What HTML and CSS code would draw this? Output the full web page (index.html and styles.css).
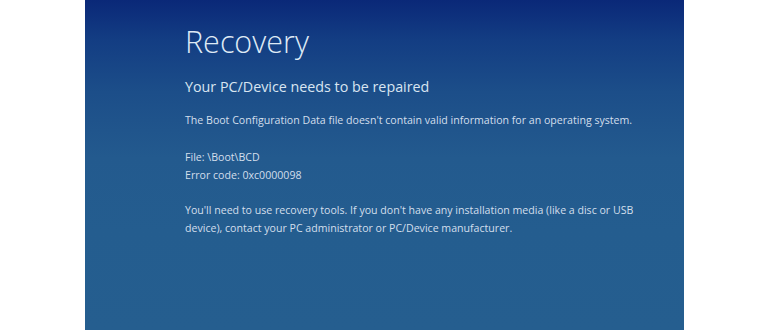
FILE: index.html
```html
<!DOCTYPE html>
<html lang="en">
<head>
<meta charset="utf-8">
<title>Recovery</title>
<link rel="stylesheet" href="styles.css">
</head>
<body>
<main class="screen">
  <h1 class="title">Recovery</h1>
  <h2 class="subtitle">Your PC/Device needs to be repaired</h2>
  <p class="text">The Boot Configuration Data file doesn't contain valid information for an operating system.</p>
  <p class="text gap">File: \Boot\BCD<br>Error code: 0xc0000098</p>
  <p class="text gap-last">You'll need to use recovery tools. If you don't have any installation media (like a disc or USB<br>device), contact your PC administrator or PC/Device manufacturer.</p>
</main>
</body>
</html>
```
FILE: styles.css
```css
html, body {
  margin: 0;
  padding: 0;
  background: #ffffff;
}
body {
  width: 770px;
  height: 330px;
  overflow: hidden;
}
.screen {
  margin-left: 85px;
  width: 599px;
  height: 330px;
  box-sizing: border-box;
  padding: 21px 0 0 100px;
  background: linear-gradient(180deg, #0a2878 0%, #133d83 12%, #1c4e89 28%, #235a8e 48%, #245d8f 70%, #255e8f 100%);
  color: #d9e5f1;
  font-family: "Open Sans", "Noto Sans", sans-serif;
}
.title {
  margin: 0;
  font-size: 30.5px;
  line-height: 40px;
  font-weight: 300;
  color: #dfeaf5;
}
.subtitle {
  margin: 15.5px 0 0;
  font-size: 14.3px;
  line-height: 20px;
  font-weight: 400;
  color: #d9e5f1;
}
.text {
  margin: 15.5px 0 0;
  font-size: 10.6px;
  line-height: 17.5px;
  color: #d3dfec;
}
.gap {
  margin-top: 19.5px;
}
.text.gap-last {
  margin-top: 18px;
}
```
